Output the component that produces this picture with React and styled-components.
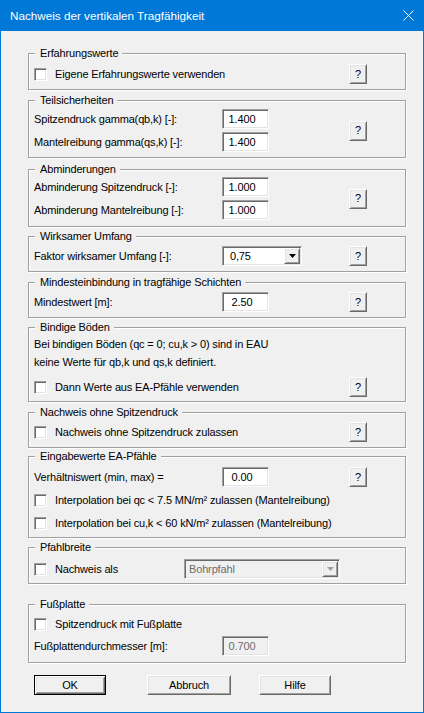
import React from "react";
import styled, { createGlobalStyle, css } from "styled-components";

const Global = createGlobalStyle`
  html, body { margin: 0; padding: 0; background: #f0f0f0; }
  body { font-family: "Liberation Sans", Arial, sans-serif; }
  * { box-sizing: border-box; }
`;

const sunken = css`
  border: 1px solid;
  border-color: #a0a0a0 #ffffff #ffffff #a0a0a0;
  box-shadow: inset 1px 1px 0 #696969, inset -1px -1px 0 #e3e3e3;
`;

const raised = css`
  border: 1px solid;
  border-color: #ffffff #696969 #696969 #ffffff;
  box-shadow: inset 1px 1px 0 #e3e3e3, inset -1px -1px 0 #a0a0a0;
  background: #f0f0f0;
`;

const Window = styled.div`
  width: 424px;
  height: 713px;
  display: flex;
  flex-direction: column;
  background: #0078d7;
  padding: 0 1px 1px 1px;
`;

const TitleBar = styled.div`
  flex: none;
  height: 31px;
  display: flex;
  align-items: center;
  justify-content: space-between;
  padding: 0 9px 0 9px;
  color: #ffffff;
  font-size: 11.7px;
`;

const Client = styled.div`
  flex: 1;
  background: #f0f0f0;
  padding: 22px 0 0 27px;
  font-size: 11px;
  letter-spacing: -0.15px;
  color: #000;
`;

const Group = styled.div`
  width: 378px;
  margin-top: ${(p) => p.$mt || 0}px;
  border: 1px solid #a0a0a0;
  box-shadow: inset 1px 1px 0 #ffffff, 1px 1px 0 #ffffff;
`;

const Legend = styled.div`
  width: fit-content;
  height: 13px;
  line-height: 13px;
  margin: -7px 0 0 6px;
  padding: 0 4px 0 5px;
  background: #f0f0f0;
  white-space: nowrap;
`;

const Body = styled.div`
  padding: ${(p) => p.$pt}px 38px ${(p) => p.$pb}px 5px;
`;

const Row = styled.div`
  display: flex;
  align-items: center;
  height: 20px;
  margin-top: ${(p) => p.$mt || 0}px;
`;

const Split = styled.div`
  display: flex;
  align-items: center;
`;

const Stack = styled.div`
  display: flex;
  flex-direction: column;
  gap: 3px;
`;

const Label = styled.span`
  flex: none;
  width: ${(p) => (p.$w === undefined ? 188 : p.$w)}px;
  white-space: nowrap;
`;

const Edit = styled.div`
  ${sunken};
  flex: none;
  width: 47px;
  height: 20px;
  display: flex;
  align-items: center;
  justify-content: center;
  padding: 0 8px 0 1px;
  background: ${(p) => (p.$disabled ? "#f0f0f0" : "#ffffff")};
  color: ${(p) => (p.$disabled ? "#6d6d6d" : "#000000")};
  white-space: nowrap;
`;

const Help = styled.div`
  ${raised};
  flex: none;
  margin-left: auto;
  width: 18px;
  height: 20px;
  display: flex;
  align-items: center;
  justify-content: center;
  padding-bottom: 1px;
`;

const Box = styled.span`
  ${sunken};
  flex: none;
  width: 13px;
  height: 13px;
  background: #ffffff;
`;

const CheckText = styled.span`
  flex: none;
  margin-left: 8px;
  width: ${(p) => (p.$w ? `${p.$w}px` : "auto")};
  white-space: nowrap;
`;

const Select = styled.div`
  ${sunken};
  flex: none;
  width: ${(p) => p.$w}px;
  height: 20px;
  padding: 1px;
  display: flex;
  align-items: stretch;
  background: ${(p) => (p.$disabled ? "#f0f0f0" : "#ffffff")};
  color: ${(p) => (p.$disabled ? "#6d6d6d" : "#000000")};
`;

const SelectText = styled.span`
  flex: 1;
  display: flex;
  align-items: center;
  padding-left: ${(p) => p.$pl}px;
  white-space: nowrap;
`;

const ArrowBtn = styled.span`
  ${raised};
  flex: none;
  width: 16px;
  height: 16px;
  display: flex;
  align-items: center;
  justify-content: center;
`;

const Text = styled.div`
  line-height: 18px;
  white-space: nowrap;
`;

const ButtonBar = styled.div`
  display: flex;
  margin-top: 12px;
  padding-left: 6px;
`;

const PushButton = styled.div`
  ${raised};
  flex: none;
  width: ${(p) => p.$w}px;
  height: 20px;
  margin-left: ${(p) => p.$ml || 0}px;
  display: flex;
  align-items: center;
  justify-content: center;
  ${(p) =>
    p.$default &&
    css`
      border: 1px solid #000000;
      box-shadow: inset 1px 1px 0 #ffffff, inset -1px -1px 0 #696969,
        inset 2px 2px 0 #e3e3e3, inset -2px -2px 0 #a0a0a0;
    `}
`;

const Arrow = ({ disabled }) => (
  <svg width="7" height="4" viewBox="0 0 7 4">
    <polygon points="0,0 7,0 3.5,4" fill={disabled ? "#a0a0a0" : "#000"} />
  </svg>
);

const Check = ({ children, w }) => (
  <>
    <Box />
    <CheckText $w={w}>{children}</CheckText>
  </>
);

export default function App() {
  return (
    <>
      <Global />
      <Window>
        <TitleBar>
          <span>Nachweis der vertikalen Tragfähigkeit</span>
          <svg width="11" height="11" viewBox="0 0 11 11">
            <path d="M0.5 0.5 L10.5 10.5 M10.5 0.5 L0.5 10.5" stroke="#fff" strokeWidth="1" />
          </svg>
        </TitleBar>
        <Client>
          <Group>
            <Legend>Erfahrungswerte</Legend>
            <Body $pt={4} $pb={5}>
              <Row>
                <Check>Eigene Erfahrungswerte verwenden</Check>
                <Help>?</Help>
              </Row>
            </Body>
          </Group>

          <Group $mt={10}>
            <Legend>Teilsicherheiten</Legend>
            <Body $pt={2} $pb={5}>
              <Split>
                <Stack>
                  <Row>
                    <Label>Spitzendruck gamma(qb,k) [-]:</Label>
                    <Edit>1.400</Edit>
                  </Row>
                  <Row>
                    <Label>Mantelreibung gamma(qs,k) [-]:</Label>
                    <Edit>1.400</Edit>
                  </Row>
                </Stack>
                <Help>?</Help>
              </Split>
            </Body>
          </Group>

          <Group $mt={11}>
            <Legend>Abminderungen</Legend>
            <Body $pt={1} $pb={6}>
              <Split>
                <Stack>
                  <Row>
                    <Label>Abminderung Spitzendruck [-]:</Label>
                    <Edit>1.000</Edit>
                  </Row>
                  <Row>
                    <Label>Abminderung Mantelreibung [-]:</Label>
                    <Edit>1.000</Edit>
                  </Row>
                </Stack>
                <Help>?</Help>
              </Split>
            </Body>
          </Group>

          <Group $mt={9}>
            <Legend>Wirksamer Umfang</Legend>
            <Body $pt={3} $pb={5}>
              <Row>
                <Label>Faktor wirksamer Umfang [-]:</Label>
                <Select $w={80}>
                  <SelectText $pl={6}>0,75</SelectText>
                  <ArrowBtn>
                    <Arrow />
                  </ArrowBtn>
                </Select>
                <Help>?</Help>
              </Row>
            </Body>
          </Group>

          <Group $mt={10}>
            <Legend>Mindesteinbindung in tragfähige Schichten</Legend>
            <Body $pt={3} $pb={5}>
              <Row>
                <Label>Mindestwert [m]:</Label>
                <Edit>2.50</Edit>
                <Help>?</Help>
              </Row>
            </Body>
          </Group>

          <Group $mt={9}>
            <Legend>Bindige Böden</Legend>
            <Body $pt={1} $pb={4}>
              <Text>Bei bindigen Böden (qc = 0; cu,k &gt; 0) sind in EAU</Text>
              <Text>keine Werte für qb,k und qs,k definiert.</Text>
              <Row $mt={6}>
                <Check>Dann Werte aus EA-Pfähle verwenden</Check>
                <Help>?</Help>
              </Row>
            </Body>
          </Group>

          <Group $mt={10}>
            <Legend>Nachweis ohne Spitzendruck</Legend>
            <Body $pt={3} $pb={5}>
              <Row>
                <Check>Nachweis ohne Spitzendruck zulassen</Check>
                <Help>?</Help>
              </Row>
            </Body>
          </Group>

          <Group $mt={8}>
            <Legend>Eingabewerte EA-Pfähle</Legend>
            <Body $pt={4} $pb={4}>
              <Row>
                <Label>Verhältniswert (min, max) =</Label>
                <Edit>0.00</Edit>
                <Help>?</Help>
              </Row>
              <Row $mt={3}>
                <Check>Interpolation bei qc &lt; 7.5 MN/m² zulassen (Mantelreibung)</Check>
              </Row>
              <Row $mt={3}>
                <Check>Interpolation bei cu,k &lt; 60 kN/m² zulassen (Mantelreibung)</Check>
              </Row>
            </Body>
          </Group>

          <Group $mt={9}>
            <Legend>Pfahlbreite</Legend>
            <Body $pt={5} $pb={4}>
              <Row>
                <Check w={129}>Nachweis als</Check>
                <Select $w={156} $disabled>
                  <SelectText $pl={3}>Bohrpfahl</SelectText>
                  <ArrowBtn>
                    <Arrow disabled />
                  </ArrowBtn>
                </Select>
              </Row>
            </Body>
          </Group>

          <Group $mt={20}>
            <Legend>Fußplatte</Legend>
            <Body $pt={3} $pb={6}>
              <Row>
                <Check>Spitzendruck mit Fußplatte</Check>
              </Row>
              <Row $mt={2}>
                <Label>Fußplattendurchmesser [m]:</Label>
                <Edit $disabled>0.700</Edit>
              </Row>
            </Body>
          </Group>

          <ButtonBar>
            <PushButton $w={72} $default>OK</PushButton>
            <PushButton $w={84} $ml={41}>Abbruch</PushButton>
            <PushButton $w={72} $ml={28}>Hilfe</PushButton>
          </ButtonBar>
        </Client>
      </Window>
    </>
  );
}
